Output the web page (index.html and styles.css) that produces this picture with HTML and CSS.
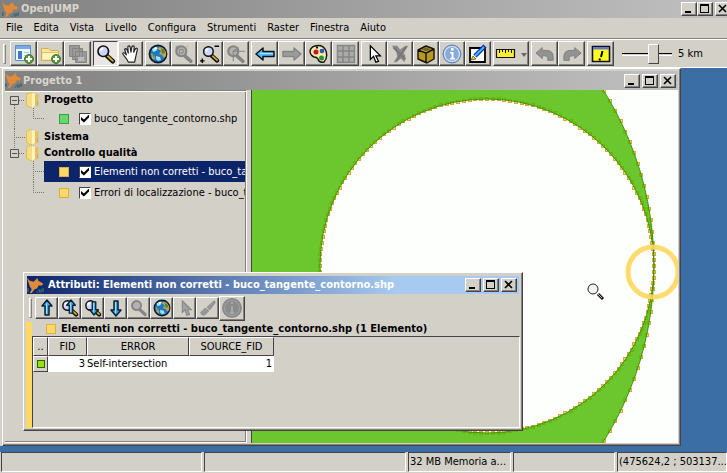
FILE: index.html
```html
<!DOCTYPE html>
<html lang="it">
<head>
<meta charset="utf-8">
<title>OpenJUMP</title>
<link rel="stylesheet" href="styles.css">
</head>
<body>
<svg class="sprite" aria-hidden="true">
  <symbol id="roo" viewBox="0 0 18 18">
    <path fill="#e08a3c" d="M0 1l3 3 4 1 4-4 1 3 5 3-1 2-4 0-1 3-3 1-3 4H3l2-4-2-3z"/>
    <path fill="none" stroke="#386a70" stroke-width="1.500" d="M10 16h1.500M13 13v2q0 1 1 1t1-1v-2M17 12v4M1 12v4"/>
  </symbol>
  <symbol id="min" viewBox="0 0 12 10"><path d="M2 7h6v2H2z"/></symbol>
  <symbol id="max" viewBox="0 0 12 10"><path fill-rule="evenodd" d="M1 0h9v9H1zM2 2v6h7V2z"/></symbol>
  <symbol id="close" viewBox="0 0 12 10"><path stroke="#000" stroke-width="1.600" d="M2 1l7 7M9 1L2 8"/></symbol>
  <symbol id="lens" viewBox="0 0 22 22">
    <path stroke="#111" stroke-width="5" stroke-linecap="round" d="M12 13l6.500 6"/>
    <path stroke="#d8b020" stroke-width="2" stroke-linecap="round" d="M13 13.500l5.500 5"/>
    <circle cx="8" cy="8" r="5.800" fill="#cfd3ff" stroke="#111" stroke-width="1.800"/>
    <path fill="none" stroke="#fff" stroke-width="2" d="M5 8q0-3 3-3"/>
  </symbol>
  <symbol id="glens" viewBox="0 0 22 22">
    <path stroke="#858585" stroke-width="4" stroke-linecap="round" d="M12 13l6.500 6"/>
    <circle cx="8" cy="8" r="5.500" fill="#b2b2b0" stroke="#858585" stroke-width="2.400"/>
  </symbol>
  <symbol id="globe" viewBox="0 0 20 20">
    <circle cx="10" cy="10" r="8.600" fill="#1b77c4" stroke="#101820" stroke-width="1.600"/>
    <path fill="#c8a050" d="M11 3l4 1 3 4v4l-2 2-2-3-3-1 2-3-3-2zM3 9l3 2 1 3-1 2-2-2z"/>
    <path fill="#48873a" d="M13 4l3 2 1 3-3 1zM4 10l2 1v3z"/>
    <path fill="#9fe2ff" d="M4 5l4-2 2 1-2 3-3 1zM8 12l4 1 1 3-3 1-2-2z"/>
    <path fill="#fff" d="M6 4l2-1 1 1-2 2z"/>
  </symbol>
  <symbol id="left" viewBox="0 0 20 16"><path fill="#4db8ff" stroke="#101418" stroke-width="1.500" stroke-linejoin="round" d="M1 8l7-6v3.500h11v5H8V14z"/><path stroke="#b8e6ff" d="M5 7.500h13"/></symbol>
  <symbol id="right" viewBox="0 0 20 16"><path fill="#9c9c9a" stroke="#858585" stroke-width="1.500" stroke-linejoin="round" d="M19 8l-7-6v3.500H1v5h11V14z"/></symbol>
  <symbol id="up" viewBox="0 0 16 18"><path fill="#35a8f0" stroke="#10202c" stroke-width="1.500" stroke-linejoin="round" d="M8 1l5 6h-3v9H6V7H3z"/><path stroke="#a8e0ff" d="M7.500 4v11"/></symbol>
  <symbol id="down" viewBox="0 0 16 18"><path fill="#35a8f0" stroke="#10202c" stroke-width="1.500" stroke-linejoin="round" d="M8 17l5-6h-3V2H6v9H3z"/><path stroke="#a8e0ff" d="M7.500 3v11"/></symbol>
  <symbol id="plus" viewBox="0 0 10 10"><circle cx="5" cy="5" r="4.500" fill="#5c9440" stroke="#447a30"/><path stroke="#fff" stroke-width="2" d="M5 2v6M2 5h6"/></symbol>
  <symbol id="folder" viewBox="0 0 13 16">
    <path fill="#f5dc86" stroke="#e3bd4d" d="M.5 2.500l4-2 3 1v14h-3l-4-2z"/>
    <path fill="#e9c055" d="M6 3l6.500-1v12L6 15z"/><path fill="#fff3bd" d="M6 1l3 1v12l-3 2z"/>
    <path fill="#8fb0bd" d="M11 9h1v4h-1z"/>
  </symbol>
  <symbol id="info" viewBox="0 0 20 20"><circle cx="10" cy="10" r="9" fill="#7da2d3" stroke="#5b83bd"/><circle cx="10" cy="10" r="7.500" fill="#87aad8" stroke="#dbe7f5" stroke-width="1.200"/><path fill="#fff" d="M9 4h2.500v2.500H9zM8 8h3.500v6H13v1.500H8V14h1.500V9.500H8z"/></symbol>
  <symbol id="undo" viewBox="0 0 22 18"><path fill="#929292" stroke="#7e7e7e" d="M1 8l7-6v3h4q8 0 8 7v4h-6v-3q0-2-3-2H8v3z"/></symbol>
</svg>

<div class="app">
  <header class="titlebar titlebar--app">
    <svg class="logo"><use href="#roo"/></svg>
    <h1>OpenJUMP</h1>
    <span class="winbtns">
      <button aria-label="Riduci a icona"><svg><use href="#min"/></svg></button><button aria-label="Ingrandisci"><svg><use href="#max"/></svg></button><button class="apart" aria-label="Chiudi"><svg><use href="#close"/></svg></button>
    </span>
  </header>

  <nav class="menu">
    <a href="#">File</a><a href="#">Edita</a><a href="#">Vista</a><a href="#">Livello</a><a href="#">Configura</a><a href="#">Strumenti</a><a href="#">Raster</a><a href="#">Finestra</a><a href="#">Aiuto</a>
  </nav>

  <div class="toolbar">
    <i class="grip"></i>
    <div class="tools wide">
      <button aria-label="Nuovo progetto"><svg viewBox="0 0 20 20"><path fill="#eef6ff" stroke="#5a8fd0" d="M1.500 1.500h15v15h-15z"/><path fill="#78aae6" d="M2 2h14v3H2z"/><path fill="#3f79c4" d="M4 7h4v8H4z"/><path stroke="#a8c8ee" d="M10 8.500h5M10 11.500h4"/><use href="#plus" x="10" y="10" width="10" height="10"/></svg></button>
      <button aria-label="Apri"><svg viewBox="0 0 20 20"><path fill="#fbe79b" stroke="#d6b04c" d="M.5 4.500h7l2 2h8v10H.5z"/><path fill="#fff4c0" d="M2 9h15v6H2z"/><path stroke="#e0c060" d="M1 8.500h16"/><use href="#plus" x="10" y="10" width="10" height="10"/></svg></button>
      <button aria-label="Salva" disabled><svg viewBox="0 0 20 20"><path fill="#9a9a9a" stroke="#858585" d="M1.500 1.500h10v11h-10zM4.500 4.500h10v11h-10zM7.500 7.500h11v11h-11z"/><path fill="#bbb" d="M10 13h6v4h-6z"/></svg></button>
    </div>
    <div class="tools narrow">
      <button class="pressed" aria-label="Zoom"><svg viewBox="0 0 22 22"><use href="#lens"/></svg></button>
      <button aria-label="Sposta"><svg viewBox="0 0 22 22"><path fill="#fff" stroke="#222" stroke-width="1.300" stroke-linejoin="round" d="M8 20q-1-3-3-5l-3-4q0-2 2-1l2 2-2-6q1-2 2.500 0L8 10 7.500 3q1.500-2 2.500 0l1 6 1-6q2-2 2.500 0L14 9l2-4q2-1 2 1l-2 9-1 5z"/></svg></button>
    </div>
    <div class="tools">
      <button aria-label="Zoom totale"><svg viewBox="0 0 20 20"><use href="#globe"/></svg></button>
      <button aria-label="Zoom al livello" disabled><svg viewBox="0 0 22 22"><use href="#glens"/><path fill="none" stroke="#858585" d="M2.500 7V2.500H7M6 6h4v4H6zM14 2.500h1"/></svg></button>
      <button aria-label="Zoom avanti e indietro"><svg viewBox="0 0 22 22"><use href="#lens" x="2" y="1" width="20" height="20"/><path stroke="#000" stroke-width="1.500" d="M16 2.500h5M0 18.500h5M2.500 16v5"/></svg></button>
      <button aria-label="Zoom selezione" disabled><svg viewBox="0 0 22 22"><use href="#glens"/><path fill="none" stroke="#858585" stroke-width="1.200" d="M8 19V8h13M8 8l6-4"/></svg></button>
    </div>
    <div class="tools wide">
      <button aria-label="Precedente"><svg viewBox="0 0 20 16"><use href="#left"/></svg></button>
      <button aria-label="Successivo" disabled><svg viewBox="0 0 20 16"><use href="#right"/></svg></button>
      <button aria-label="Stili"><svg viewBox="0 0 20 20"><path fill="#f6e9a0" stroke="#111" stroke-width="1.400" d="M6 2q8-2 11 5 2 7-2 11-5 1-6-3-1-2-4-2-4-2-4-6 1-4 5-5z"/><circle cx="7" cy="8" r="2.500" fill="#c01830"/><circle cx="13" cy="7" r="2.300" fill="#2454c8"/><circle cx="12.500" cy="14" r="2.500" fill="#28943a"/><path stroke="#111" stroke-width="2" d="M7 3.500h2"/></svg></button>
      <button aria-label="Tabella" disabled><svg viewBox="0 0 20 20"><path fill="#aaa" stroke="#868686" stroke-width="1.500" d="M1.500 1.500h17v17h-17zM7 1.500v17M13 1.500v17M1.500 7h17M1.500 13h17"/></svg></button>
    </div>
    <div class="tools">
      <button aria-label="Seleziona"><svg viewBox="0 0 22 22"><path fill="#fff" stroke="#000" stroke-width="1.400" d="M7 2v15l3.500-3.500L13 20l3-1-3-6h5z"/></svg></button>
      <button aria-label="Deseleziona" disabled><svg viewBox="0 0 22 22"><path fill="#898989" d="M2 2h6l3 4 6-4h3l-5 8 2 3-1 7-4-4-5 4H4l4-6-1-5z"/><path fill="none" stroke="#777" stroke-width="2" d="M4 4l13 13M18 3L7 18"/></svg></button>
      <button aria-label="Modifica"><svg viewBox="0 0 20 20"><path fill="#b89820" stroke="#171200" stroke-width="1.400" stroke-linejoin="round" d="M2 6l8-4 8 3v10l-7 4-9-4zM2 6l8 3 8-4M10 9v10"/><path fill="#7a6208" d="M5 5.500l5-2 5 2-5 2z"/></svg></button>
      <button aria-label="Informazioni"><svg viewBox="0 0 20 20"><use href="#info"/></svg></button>
      <button aria-label="Penna"><svg viewBox="0 0 20 20"><path fill="#fff" stroke="#000" stroke-width="1.800" d="M2 4h15v14H2z"/><path stroke="#1428b0" stroke-width="4.500" d="M7 12L17 2"/><path stroke="#35bdf5" stroke-width="2" d="M7 12L16 3"/><path fill="#e8d020" stroke="#332b00" stroke-width=".6" d="M3 16l2-4 3 3z"/></svg></button>
    </div>
    <div class="tools">
      <button class="ruler" aria-label="Misura"><svg viewBox="0 0 32 20"><path fill="#ffee30" stroke="#111" stroke-width="1.200" d="M1.500 5.500h18v8h-18z"/><path stroke="#111" d="M4.500 6v3M7.500 6v2M10.500 6v3M13.500 6v2M16.500 6v3"/><path fill="#666" d="M26 9h6l-3 4z"/></svg></button>
    </div>
    <div class="tools wide">
      <button aria-label="Annulla" disabled><svg viewBox="0 0 22 18"><use href="#undo"/></svg></button>
      <button aria-label="Ripeti" disabled><svg class="flip" viewBox="0 0 22 18"><use href="#undo"/></svg></button>
    </div>
    <div class="tools wide">
      <button aria-label="Messaggi"><svg viewBox="0 0 20 20"><path fill="#ffff20" stroke="#111" stroke-width="1.600" d="M1.500 2.500h17v15h-17z"/><path fill="#6878c8" d="M2 3h16v2.500H2z"/><path stroke="#000" stroke-width="2" d="M11.500 7l-1.500 6M9 14.500l-.5 2"/></svg></button>
    </div>
    <input class="scale" id="scale" type="range" min="0" max="100" value="67">
    <label for="scale">5 km</label>
  </div>

  <main class="desktop">
    <section class="window project">
      <header class="titlebar">
        <svg class="logo"><use href="#roo"/></svg>
        <h2>Progetto 1</h2>
        <span class="winbtns">
          <button aria-label="Riduci a icona"><svg><use href="#min"/></svg></button>
          <button aria-label="Ingrandisci"><svg><use href="#max"/></svg></button>
          <button aria-label="Chiudi"><svg><use href="#close"/></svg></button>
        </span>
      </header>
      <div class="split">
        <div class="tree">
          <div class="node">
            <svg class="gutter" viewBox="0 0 39 16"><path class="dots" d="M9.500 13v3M14 8.500h6"/><path class="box" d="M5.500 4.500h8v8h-8zM7 8.500h5"/><use href="#folder" x="21" width="13" height="16"/></svg><b>Progetto</b>
          </div>
          <div class="leaf">
            <svg class="gutter" viewBox="0 0 39 21"><path class="dots" d="M9.500 0v21M28.500 0v10.500H39"/></svg>
            <div class="layer"><i class="swatch green"></i><input type="checkbox" id="l1" checked><label for="l1">buco_tangente_contorno.shp</label></div>
          </div>
          <div class="node">
            <svg class="gutter" viewBox="0 0 39 16"><path class="dots" d="M9.500 0v16M9 8.500h11"/><use href="#folder" x="21" width="13" height="16"/></svg><b>Sistema</b>
          </div>
          <div class="node">
            <svg class="gutter" viewBox="0 0 39 16"><path class="dots" d="M9.500 0v4M14 8.500h6"/><path class="box" d="M5.500 4.500h8v8h-8zM7 8.500h5"/><use href="#folder" x="21" width="13" height="16"/></svg><b>Controllo qualità</b>
          </div>
          <div class="leaf">
            <svg class="gutter" viewBox="0 0 39 21"><path class="dots" d="M28.500 0v21M28 10.500h11"/></svg>
            <div class="layer selected"><i class="swatch"></i><input type="checkbox" id="l2" checked><label for="l2">Elementi non corretti - buco_tangente_contorno.shp</label></div>
          </div>
          <div class="leaf">
            <svg class="gutter" viewBox="0 0 39 21"><path class="dots" d="M28.500 0v10.500H39"/></svg>
            <div class="layer"><i class="swatch"></i><input type="checkbox" id="l3" checked><label for="l3">Errori di localizzazione - buco_tangente_contorno.shp</label></div>
          </div>
        </div>
        <svg class="map" id="map" role="img" aria-label="Mappa">
          <g id="vertices"></g>
          <path class="area" fill-rule="evenodd" d="M-258 176a330 330 0 1 0 660 0a330 330 0 1 0-660 0zM68 176a167 167 0 1 0 334 0a167 167 0 1 0-334 0z"/>
          <circle class="halo" cx="401" cy="182" r="25"/>
          <g class="cursor"><path stroke="#111" stroke-width="3" d="M346 204l5 5"/><path stroke="#bbb" d="M346 204l4 4"/><circle cx="341" cy="199" r="5" fill="#f4f4f4" stroke="#222"/></g>
        </svg>
      </div>
    </section>

    <section class="window dialog">
      <header class="titlebar active">
        <svg class="logo"><use href="#roo"/></svg>
        <h2>Attributi: Elementi non corretti - buco_tangente_contorno.shp</h2>
        <span class="winbtns">
          <button aria-label="Riduci a icona"><svg><use href="#min"/></svg></button>
          <button aria-label="Ingrandisci"><svg><use href="#max"/></svg></button>
          <button aria-label="Chiudi"><svg><use href="#close"/></svg></button>
        </span>
      </header>
      <div class="dialog-tools">
        <i class="grip"></i>
        <div class="tools small">
          <button aria-label="Sopra"><svg viewBox="0 0 16 18"><use href="#up"/></svg></button>
          <button aria-label="Zoom precedente"><svg viewBox="0 0 18 18"><use href="#lens" width="18" height="18"/><use href="#up" x="3" width="14" height="16"/></svg></button>
          <button aria-label="Zoom seguente"><svg viewBox="0 0 18 18"><use href="#lens" width="18" height="18"/><use href="#down" x="3" y="1" width="14" height="16"/></svg></button>
          <button aria-label="Sotto"><svg viewBox="0 0 16 18"><use href="#down"/></svg></button>
          <button aria-label="Zoom selezione" disabled><svg viewBox="0 0 22 22"><use href="#glens"/></svg></button>
          <button aria-label="Zoom totale"><svg viewBox="0 0 20 20"><use href="#globe"/></svg></button>
          <button aria-label="Seleziona" disabled><svg viewBox="0 0 20 20"><path fill="#a0a0a0" stroke="#888" stroke-width="1.200" d="M7 2v13l3-3 2 6 3-1-2-5h4z"/></svg></button>
          <button aria-label="Evidenzia" disabled><svg viewBox="0 0 20 20"><path fill="#989898" stroke="#888" d="M2 15l5-5 4 3-5 5q-4 0-4-3zM9 9l8-7 1 2-6 8z"/></svg></button>
          <button class="big" aria-label="Informazioni" disabled><svg viewBox="0 0 20 20"><circle cx="10" cy="10" r="10" fill="#8b8b8b"/><circle cx="10" cy="10" r="7.500" fill="none" stroke="#a5a5a5"/><path stroke="#a8a8a8" stroke-width="2" d="M10 4v2M10 8v7M8 15h4"/></svg></button>
        </div>
      </div>
      <div class="attributes">
        <h3><i class="swatch"></i>Elementi non corretti - buco_tangente_contorno.shp (1 Elemento)</h3>
        <div class="grid">
          <table>
            <colgroup><col class="c-mark"><col class="c-fid"><col class="c-error"><col class="c-source"></colgroup>
            <thead><tr><th>..</th><th>FID</th><th>ERROR</th><th>SOURCE_FID</th></tr></thead>
            <tbody><tr><td class="mark"><i></i></td><td class="num">3</td><td>Self-intersection</td><td class="num">1</td></tr></tbody>
          </table>
        </div>
      </div>
    </section>
  </main>

  <footer class="status"><span></span><span></span><span>32 MB Memoria a...</span><span></span><span>(475624,2 ; 503137...</span></footer>
</div>
<script src="map.js"></script>
</body>
</html>
```
FILE: styles.css
```css
:root {
  --face: #d3d0c8;
  --shade: #85827d;
  --dark: #454347;
  --navy: #0c246a;
  --yellow: #ffd868;
}
* { box-sizing: border-box; }
body {
  margin: 0;
  background: var(--face);
  color: #000;
  font: 11px/14px "DejaVu Sans Condensed", "DejaVu Sans", sans-serif;
}
h1, h2, h3 { margin: 0; font-size: 11px; line-height: 14px; white-space: nowrap; }
button { padding: 0; font: inherit; color: inherit; }
svg { display: block; }
.sprite { position: absolute; width: 0; height: 0; }
.app { display: flex; flex-direction: column; height: 100vh; overflow: hidden; }

.titlebar {
  display: flex;
  flex: none;
  align-items: center;
  height: 18px;
  padding-right: 2px;
  background: linear-gradient(90deg, #808080, #c2c1c2);
  color: #d8d5cd;
}
.titlebar h2 { flex: 1; min-width: 0; overflow: hidden; }
.titlebar h1 { flex: 1; }
.titlebar .logo { flex: none; width: 17px; height: 17px; margin-right: 1px; }
.titlebar--app { padding: 0 0 0 2px; margin-right: -4px; }
.titlebar--app .logo { margin-right: 2px; }
.titlebar.active { background: linear-gradient(90deg, #0c246a, #a6caf0 75%); color: #fff; }
.titlebar.active .logo { margin-right: 4px; }
.winbtns { display: flex; gap: 2px; }
.titlebar--app .winbtns { gap: 0; }
.winbtns .apart { margin-left: 2px; }
.winbtns button {
  width: 16px;
  height: 14px;
  background: var(--face);
  border: 1px solid;
  border-color: #fff var(--dark) var(--dark) #fff;
  box-shadow: inset -1px -1px var(--shade);
}
.winbtns svg { width: 12px; height: 10px; margin: 1px; }

.menu { display: flex; gap: 11px; height: 20px; padding: 3px 6px; }
.menu a { color: #000; text-decoration: none; }

.toolbar {
  display: flex;
  align-items: center;
  gap: 2px;
  height: 30px;
  padding-left: 3px;
  border-top: 1px solid var(--shade);
  box-shadow: inset 0 1px #fff, inset 0 -1px #fff;
}
.grip { width: 3px; height: 20px; margin-right: 2px; border: 1px solid; border-color: #fff var(--shade) var(--shade) #fff; }
.tools { display: flex; align-items: center; }
.tools button {
  display: grid;
  place-items: center;
  width: 26px;
  height: 25px;
  background: var(--face);
  border: 1px solid;
  border-color: #fff var(--dark) var(--dark) #fff;
  box-shadow: inset -1px -1px var(--shade);
}
.tools.wide button { width: 27px; }
.tools.narrow button { width: 25px; }
.tools svg { width: 20px; height: 20px; }
.tools .pressed { background: #e9e6e3; border-color: var(--dark) #fff #fff var(--dark); box-shadow: none; }
.tools button.ruler { width: 36px; }
.ruler svg { width: 32px; }
.flip { transform: scaleX(-1); }
.scale {
  appearance: none;
  width: 50px;
  height: 20px;
  margin: 0 4px 0 6px;
  background: linear-gradient(#000 0 0) center / 100% 1px no-repeat, linear-gradient(#fff 0 0) 0 11px / 100% 1px no-repeat;
}
.scale::-webkit-slider-thumb {
  appearance: none;
  width: 11px;
  height: 20px;
  background: var(--face);
  border: 1px solid;
  border-color: #fff var(--dark) var(--dark) #fff;
}

.desktop { position: relative; flex: 1; min-height: 0; overflow: hidden; background: #3a6ea5; }
.window {
  position: absolute;
  display: flex;
  flex-direction: column;
  padding: 2px;
  background: var(--face);
  border: 1px solid;
  border-color: #fff var(--dark) var(--dark) #fff;
  box-shadow: inset -1px -1px var(--shade);
}
.project { top: 0; left: 2px; right: 46px; bottom: 6px; box-shadow: inset -1px -1px var(--shade), -2px 0 var(--face); }
.project .titlebar { height: 19px; }
.split { flex: 1; display: flex; min-height: 0; }
.tree {
  flex: none;
  width: 242px;
  padding-top: 1px;
  overflow: hidden;
  border: 1px solid;
  border-color: var(--shade) #fff #fff var(--shade);
  border-left: 0;
  box-shadow: inset 0 1px #fff, inset -1px -1px var(--shade);
}
.node, .leaf { display: flex; align-items: center; height: 16px; }
.leaf { height: 21px; }
.gutter { flex: none; width: 39px; height: 100%; }
.dots { fill: none; stroke: #77746f; stroke-dasharray: 1 1; }
.box { fill: none; stroke: #55534f; }
.layer { display: flex; flex: 1; align-items: center; min-width: 0; height: 21px; margin-right: 1px; padding-left: 15px; overflow: hidden; white-space: nowrap; }
.layer.selected { background: var(--navy); color: #fff; }
.swatch { flex: none; width: 10px; height: 10px; background: var(--yellow); border: 1px solid #d8b044; }
.swatch.green { background: #6cd66c; border-color: #30a440; }
.layer input {
  appearance: none;
  flex: none;
  width: 12px;
  height: 12px;
  margin: 0 3px 0 10px;
  background: #fff;
  border: 1px solid;
  border-color: var(--dark) #fff #fff var(--dark);
}
.layer input:checked::after {
  content: "";
  display: block;
  width: 8px;
  height: 8px;
  margin: 1px;
  background: #000;
  clip-path: polygon(0 32%, 36% 62%, 100% 0, 100% 38%, 36% 100%, 0 68%);
}
.map { flex: 1; min-width: 0; height: 100%; margin-left: 4px; background: #fdfffc; border-left: 1px solid var(--dark); }
.area { fill: #4cb900; fill-opacity: .82; stroke: #358c00; stroke-opacity: .9; }
.vertex { fill: #ffd868; stroke: #d8a83c; }
.halo { fill: none; stroke: #ffd75f; stroke-width: 5; stroke-opacity: .9; }

.dialog { top: 204px; left: 23px; width: 500px; height: 159px; }
.dialog .titlebar { margin: 1px 1px 0; }
.dialog-tools { display: flex; align-items: center; height: 28px; padding-left: 3px; }
.dialog-tools .grip { margin-right: 3px; }
.tools.small button { width: 23px; height: 22px; }
.tools.small svg { width: 18px; height: 18px; }
.tools.small button.big { width: 26px; height: 25px; }
.tools.small .big svg { width: 20px; height: 20px; }
.attributes { flex: 1; display: flex; flex-direction: column; border-left: 6px solid var(--yellow); }
.attributes h3 { display: flex; align-items: center; gap: 5px; height: 14px; padding-left: 14px; }
.grid { flex: 1; border: 1px solid; border-color: var(--dark) #fff #fff var(--dark); }
table { width: 241px; table-layout: fixed; border-collapse: separate; border-spacing: 0; }
.c-mark { width: 15px; }
.c-fid { width: 39px; }
.c-error { width: 102px; }
.c-source { width: 85px; }
th {
  height: 19px;
  padding: 0;
  font-weight: normal;
  white-space: nowrap;
  border: 1px solid;
  border-color: #fff var(--dark) var(--dark) #fff;
}
td { height: 16px; padding: 0; background: #fff; white-space: nowrap; }
.num { padding-right: 2px; text-align: right; }
td.mark { background: var(--face); border: 1px solid; border-color: #fff var(--dark) var(--dark) #fff; }
.mark i { display: block; width: 8px; height: 8px; margin: 0 auto; background: #9ce000; border: 1px solid #286010; }

.status { display: grid; grid-template-columns: 201fr 202fr 103fr 102fr 110fr; gap: 2px; height: 21px; padding: 0 0 1px 1px; }
.status span {
  min-width: 0;
  padding: 2px 0 0 1px;
  overflow: hidden;
  white-space: nowrap;
  border: 1px solid;
  border-color: var(--dark) #fff #fff var(--dark);
}
```
FILE: map.js
```js
// Polygon rings of the layer: outer boundary and the hole tangent to it.
const rings = [
  { cx: 72, cy: 176, r: 330 },
  { cx: 235, cy: 176, r: 167 }
];
const SEGMENTS = 180;
const layer = document.getElementById("vertices");

for (const ring of rings) {
  for (let i = 0; i < SEGMENTS; i++) {
    const a = (i * 2 * Math.PI) / SEGMENTS;
    const x = Math.round(ring.cx + ring.r * Math.cos(a));
    const y = Math.round(ring.cy + ring.r * Math.sin(a));
    const rect = document.createElementNS("http://www.w3.org/2000/svg", "rect");
    rect.setAttribute("class", "vertex");
    rect.setAttribute("x", x - 1.5);
    rect.setAttribute("y", y - 1.5);
    rect.setAttribute("width", 3);
    rect.setAttribute("height", 3);
    layer.append(rect);
  }
}
```
